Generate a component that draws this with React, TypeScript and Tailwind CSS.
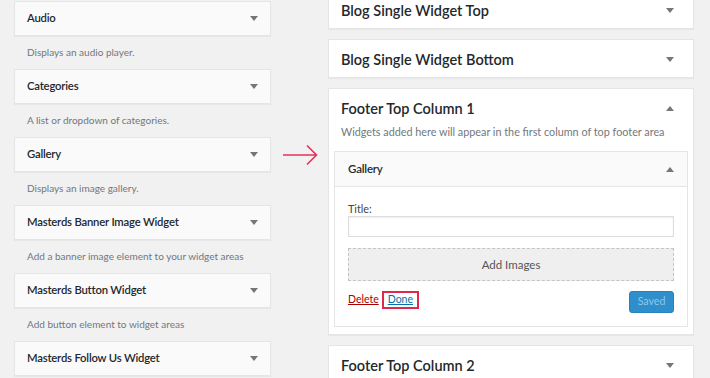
import React from "react";

const font = { fontFamily: 'Lato, "Open Sans", Arial, sans-serif' };

function Caret({ up = false }: { up?: boolean }) {
  return (
    <svg width="8" height="5" viewBox="0 0 8 5" className="shrink-0">
      {up ? <path d="M0 5 L4 0 L8 5 Z" fill="#72777c" /> : <path d="M0 0 L8 0 L4 5 Z" fill="#72777c" />}
    </svg>
  );
}

const available = [
  { title: "Audio", desc: "Displays an audio player." },
  { title: "Categories", desc: "A list or dropdown of categories." },
  { title: "Gallery", desc: "Displays an image gallery." },
  { title: "Masterds Banner Image Widget", desc: "Add a banner image element to your widget areas" },
  { title: "Masterds Button Widget", desc: "Add button element to widget areas" },
  { title: "Masterds Follow Us Widget", desc: "" },
];

function AvailableWidget({ title, desc }: { title: string; desc: string }) {
  return (
    <div>
      <div className="h-[35px] flex items-center justify-between pl-[12px] pr-[12px] bg-[#fafafa] border border-[#e5e5e5] shadow-[0_1px_1px_rgba(0,0,0,0.04)]">
        <span className="text-[11.3px] tracking-[-0.2px] font-semibold text-[#23282d]">{title}</span>
        <Caret />
      </div>
      <div className="h-[33px] flex items-center pl-[13px] text-[10px] text-[#72777c] whitespace-nowrap">{desc}</div>
    </div>
  );
}

function SidebarBox({ title, up = false, children }: { title: string; up?: boolean; children?: React.ReactNode }) {
  return (
    <div className="bg-white border border-[#e5e5e5] shadow-[0_1px_1px_rgba(0,0,0,0.04)]">
      <div className="h-[37px] pt-[2px] flex items-center justify-between pl-[12px] pr-[19px]">
        <span className="text-[14.5px] font-semibold text-[#23282d]">{title}</span>
        <Caret up={up} />
      </div>
      {children}
    </div>
  );
}

export default function App() {
  return (
    <div className="w-[710px] h-[378px] overflow-hidden bg-[#f1f1f1] flex" style={font}>
      <div className="w-[257px] ml-[14px] pt-[1px] flex flex-col">
        {available.map((w) => (
          <AvailableWidget key={w.title} title={w.title} desc={w.desc} />
        ))}
      </div>

      <div className="w-[57px] flex justify-center pt-[144px]">
        <svg width="36" height="22" viewBox="0 0 36 22">
          <path d="M1 11 H34 M25 1.5 L34.5 11 L25 20.5" stroke="#e8305a" strokeWidth="1.6" fill="none" />
        </svg>
      </div>

      <div className="w-[366px] -mt-[10px] flex flex-col gap-[10px]">
        <SidebarBox title="Blog Single Widget Top" />
        <SidebarBox title="Blog Single Widget Bottom" />
        <SidebarBox title="Footer Top Column 1" up>
          <div className="-mt-[2px] pl-[12px] text-[10.8px] leading-[16px] text-[#72777c] whitespace-nowrap">
            Widgets added here will appear in the first column of top footer area
          </div>
          <div className="mx-[5px] mt-[11px] mb-[7px] border border-[#e5e5e5] bg-white">
            <div className="h-[35px] flex items-center justify-between pl-[13px] pr-[13px] bg-[#fafafa] border-b border-[#e5e5e5]">
              <span className="text-[11.5px] tracking-[-0.2px] font-semibold text-[#23282d]">Gallery</span>
              <Caret up />
            </div>
            <div className="px-[13px] pt-[16px] pb-[13px]">
              <div className="text-[10.8px] leading-[12px] text-[#444]">Title:</div>
              <div className="mt-[1px] h-[21px] border border-[#ddd] bg-white shadow-[inset_0_1px_2px_rgba(0,0,0,0.07)]" />
              <div className="mt-[11px] h-[33px] flex items-center justify-center border border-dashed border-[#c3c4c7] bg-[#efefef] text-[11.5px] text-[#555]">
                Add Images
              </div>
              <div className="mt-[10px] flex items-start justify-between">
                <div className="flex items-center text-[10.5px]">
                  <span className="text-[#a00] underline">Delete</span>
                  <span className="ml-[3px] px-[4px] h-[18px] flex items-center border-2 border-[#e0284f] text-[#0073aa] underline">Done</span>
                </div>
                <div className="w-[45px] h-[22px] rounded-[3px] bg-[#2e8fcc] border border-[#2a82b8] flex items-center justify-center text-[10.6px] text-[#93c6e6]">
                  Saved
                </div>
              </div>
            </div>
          </div>
        </SidebarBox>
        <SidebarBox title="Footer Top Column 2" />
      </div>
    </div>
  );
}
